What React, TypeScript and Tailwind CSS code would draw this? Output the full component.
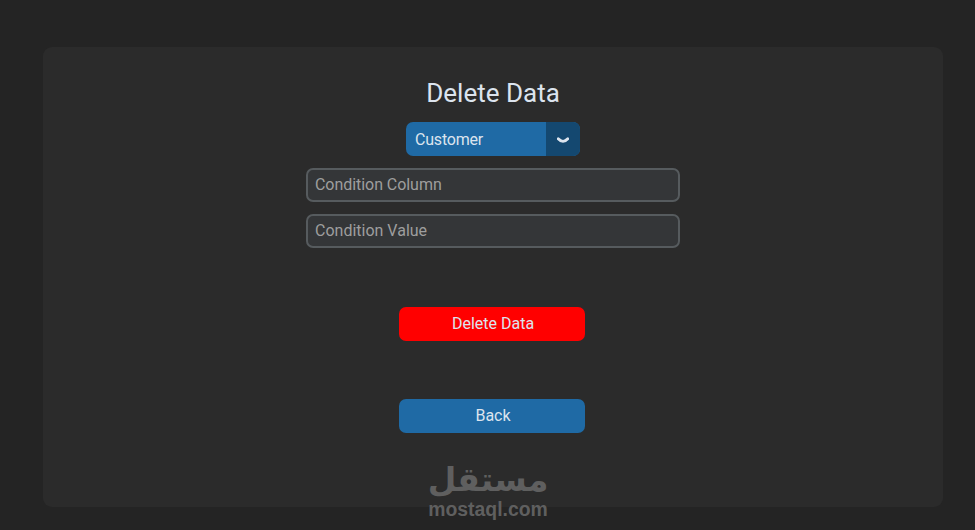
const roboto = "font-['Roboto',sans-serif]";

export default function App() {
  return (
    <main className={`relative h-[530px] w-[975px] overflow-hidden bg-[#242424] pl-[43px] pt-[47px] ${roboto}`}>
      <div className="flex h-[460px] w-[900px] flex-col items-center rounded-[9px] bg-[#2b2b2b] pt-[29px]">
        {/* Heading */}
        <h1 className="h-[34px] text-[26px] leading-[35px] text-[#dce4ee]">Delete Data</h1>

        {/* Table picker */}
        <div className="mt-[12px] flex h-[34px] w-[174px] overflow-hidden rounded-[7px] bg-[#1f6aa5] text-[16px] text-[#dce4ee]">
          <span className="flex-1 pl-[9px] leading-[36px] tracking-[-0.2px]">Customer</span>
          <span className="flex w-[34px] items-center justify-center bg-[#144870]">
            <svg width="12" height="7" viewBox="0 0 12 7" fill="none" className="mt-[2px]">
              <path d="M1.2 1.8 Q6 7 10.8 1.8" stroke="#dce4ee" strokeWidth="2.9" strokeLinecap="round" />
            </svg>
          </span>
        </div>

        {/* Inputs */}
        <div className="mt-[12px] flex flex-col gap-[12px]">
          <div className="h-[34px] w-[374px] rounded-[7px] border-2 border-[#565b5e] bg-[#343638] pl-[7px] text-[16px] leading-[30px] tracking-[-0.05px] text-[#9e9e9e]">
            Condition Column
          </div>
          <div className="h-[34px] w-[374px] rounded-[7px] border-2 border-[#565b5e] bg-[#343638] pl-[7px] text-[16px] leading-[30px] text-[#9e9e9e]">
            Condition Value
          </div>
        </div>

        {/* Buttons */}
        <button className="mr-[2px] mt-[59px] h-[34px] w-[186px] rounded-[7px] bg-[#ff0000] pl-[2px] text-[16px] text-[#dce4ee]">
          Delete Data
        </button>
        <button className="mr-[2px] mt-[58px] h-[34px] w-[186px] rounded-[7px] bg-[#1f6aa5] pl-[2px] text-[16px] text-[#dce4ee]">
          Back
        </button>
      </div>

      {/* Watermark */}
      <div className="absolute left-[428px] top-[461px] flex w-[120px] flex-col items-center text-[#5f5f5f]">
        <span dir="rtl" className="h-[37px] font-['DejaVu_Sans',sans-serif] text-[33px] font-bold leading-[37px]">
          مستقل
        </span>
        <span className="font-['Liberation_Sans',sans-serif] text-[19.4px] font-bold leading-[22px]">mostaql.com</span>
      </div>
    </main>
  );
}
